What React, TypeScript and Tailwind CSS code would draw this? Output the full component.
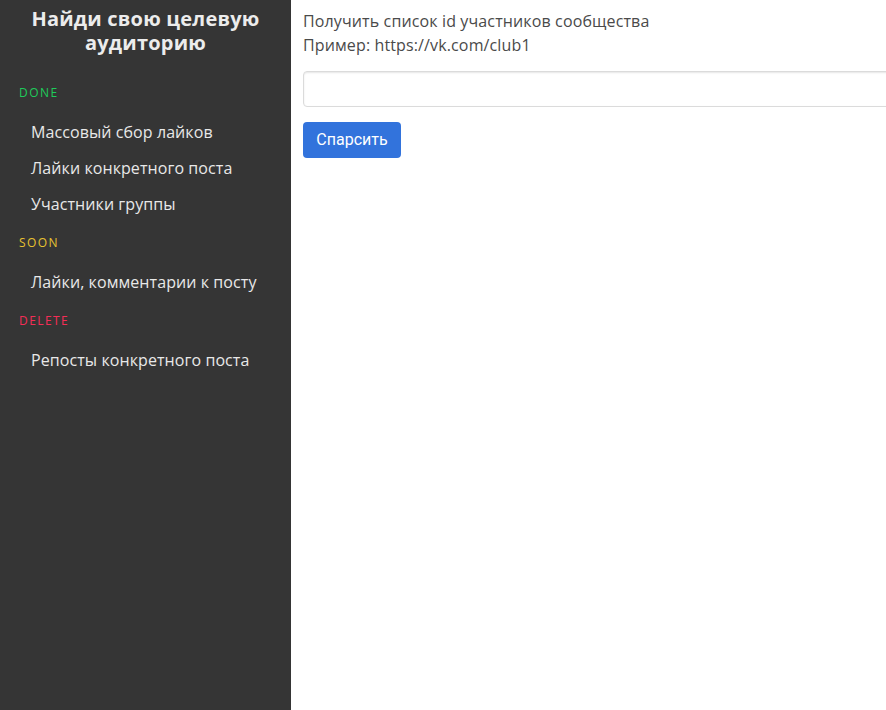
export default function App() {
  const item = "pl-[31px] text-[16px] leading-[24px] tracking-[0.005em] text-[#e8e8e8]";
  const label = "pl-[19px] text-[12px] leading-[18px] tracking-[0.12em]";
  return (
    <div className="flex h-[710px] w-[886px] overflow-hidden bg-white" style={{ fontFamily: '"Open Sans", sans-serif' }}>
      <aside className="flex w-[291px] shrink-0 flex-col bg-[#353535]">
        <h1 className="pt-[7px] text-center text-[20px] font-bold leading-[24px] tracking-[0.01em] text-[#ececec]">
          Найди свою целевую
          <br />
          аудиторию
        </h1>
        <div className={`${label} mt-[29px] text-[#1ecb5a]`}>DONE</div>
        <div className="mt-[18px] flex flex-col gap-[12px]">
          <div className={item}>Массовый сбор лайков</div>
          <div className={item}>Лайки конкретного поста</div>
          <div className={item}>Участники группы</div>
        </div>
        <div className={`${label} mt-[18px] text-[#e8c230]`}>SOON</div>
        <div className={`${item} mt-[18px]`}>Лайки, комментарии к посту</div>
        <div className={`${label} mt-[18px] text-[#f52d56]`}>DELETE</div>
        <div className={`${item} mt-[18px]`}>Репосты конкретного поста</div>
      </aside>
      <main className="flex min-w-0 flex-1 flex-col pl-[12px] pt-[9px]">
        <p className="text-[16px] leading-[24px] tracking-[0.008em] text-[#4a4a4a]">Получить список id участников сообщества</p>
        <p className="text-[16px] leading-[24px] tracking-[0.008em] text-[#4a4a4a]">Пример: https://vk.com/club1</p>
        <input
          className="mt-[14px] h-[36px] w-[620px] shrink-0 rounded-[4px] border border-[#dbdbdb] bg-white px-3 shadow-[inset_0_1px_2px_rgba(10,10,10,0.1)] outline-none"
          type="text"
        />
        <div className="mt-[15px]">
          <button
            className="h-[36px] w-[98px] rounded-[4px] bg-[#3273dc] text-[16px] text-white"
            style={{ fontFamily: "Roboto, sans-serif" }}
          >
            Спарсить
          </button>
        </div>
      </main>
    </div>
  );
}
